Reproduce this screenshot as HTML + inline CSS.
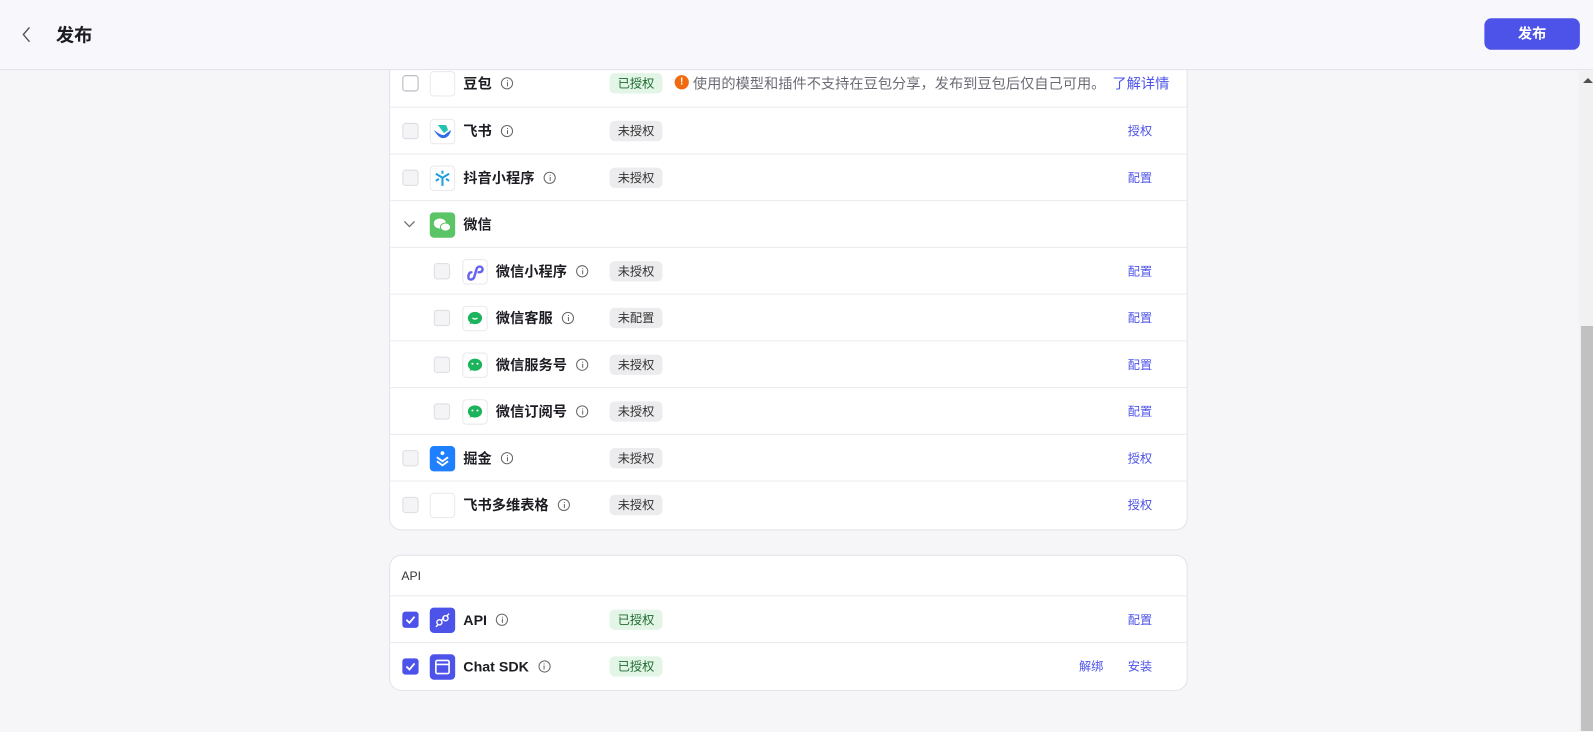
<!DOCTYPE html>
<html><head><meta charset="utf-8"><style>
*{box-sizing:border-box;margin:0;padding:0}
body{width:1593px;height:731px;overflow:hidden;background:#f6f6f9;font-family:"Liberation Sans","Noto Sans CJK SC",sans-serif;position:relative;color:#1c1d23}
.wrap{position:absolute;left:0;top:0;width:1568px;height:720px;transform:scale(1.016);transform-origin:0 0}
.hdr{position:absolute;left:0;top:0;width:1600px;height:69px;background:#f7f7fc;border-bottom:1px solid #e3e3ea;z-index:5}
.hdr .t{position:absolute;left:55px;top:21px;font-size:18px;font-weight:bold}
.btn{position:absolute;left:1461px;top:18px;width:94px;height:31px;border-radius:7px;background:#4d53e8;color:#fff;font-size:14px;font-weight:bold;text-align:center;line-height:31px}
.card{position:absolute;left:383px;width:786px;background:#fff;border:1px solid #e2e2e8;border-radius:12px}
.row{position:absolute;left:0;width:784px;height:46px;border-top:1px solid #ebebef}
.cb{position:absolute;top:15px;width:16px;height:16px;border:1px solid #dcdce2;border-radius:3px;background:#f4f4f6}
.cb.w{background:#fff;border-color:#b5b5bd}
.cb.on{background:#4d53e8;border-color:#4d53e8}
.ic{position:absolute;top:11px;width:25px;height:25px;border:1px solid #e9e9ee;border-radius:4px;background:#fff;overflow:hidden}
.nm{position:absolute;top:13px;font-size:14px;font-weight:bold;color:#1c1d23;white-space:nowrap;line-height:20px}
.nm i{display:inline-block;width:12px;height:12px;border:1px solid #666;border-radius:50%;margin-left:9px;vertical-align:-1px;position:relative}
.nm i:after{content:"";position:absolute;left:4.5px;top:4px;width:1px;height:4px;background:#666}
.nm i:before{content:"";position:absolute;left:4.5px;top:2px;width:1px;height:1px;background:#666}
.bd{position:absolute;left:216px;top:13px;height:20px;width:52px;border-radius:5px;font-size:12px;text-align:center;line-height:20px;background:#ececee;color:#333}
.bd.g{background:#e2f5e6;color:#1e6b2f}
.ac{position:absolute;left:726px;top:14px;font-size:12px;color:#4d53e8}
</style></head><body>
<div class="wrap">
<div class="hdr">
<svg style="position:absolute;left:21px;top:26px" width="10" height="16" viewBox="0 0 10 16"><path d="M8 1L2 8l6 7" fill="none" stroke="#555" stroke-width="1.4"/></svg>
<div class="t">发布</div>
<div class="btn">发布</div>
</div>

<div class="card" style="top:40px;height:482px">
<div class="row" style="top:18px;border-top:none">
<div class="cb w" style="left:12px"></div><div class="ic" style="left:39px"></div>
<div class="nm" style="left:72px">豆包<i></i></div><div class="bd g">已授权</div>
<div style="position:absolute;left:280px;top:15px;width:14px;height:14px;border-radius:50%;background:#f06a0f;color:#fff;font-size:10px;font-weight:bold;text-align:center;line-height:14px">!</div>
<div style="position:absolute;left:298px;top:13px;font-size:14px;color:#6b6b75">使用的模型和插件不支持在豆包分享，发布到豆包后仅自己可用。 <span style="color:#4d53e8;margin-left:3px">了解详情</span></div>
</div>
<div class="row" style="top:64px">
<div class="cb" style="left:12px"></div><div class="ic" style="left:39px"><svg width="23" height="23" viewBox="0 0 23 23"><path d="M3 10c3 2 6 5 10 5l7-5c-1 5-4 8-8 8-3 0-6-3-9-8z" fill="#2f6ce5"/><path d="M7 5h8l2 5-4 3z" fill="#21c2b0"/></svg></div>
<div class="nm" style="left:72px">飞书<i></i></div><div class="bd">未授权</div><div class="ac">授权</div></div>
<div class="row" style="top:110px">
<div class="cb" style="left:12px"></div><div class="ic" style="left:39px"><svg width="23" height="23" viewBox="0 0 23 23" fill="none" stroke="#1d9ee0" stroke-width="2"><path d="M11.5 11v8M11.5 11L5 7M11.5 11l6.5-4M5 14l3-2M18 14l-3-2M11.5 4v3"/></svg></div>
<div class="nm" style="left:72px">抖音小程序<i></i></div><div class="bd">未授权</div><div class="ac">配置</div></div>
<div class="row" style="top:156px">
<svg style="position:absolute;left:13px;top:19px" width="12" height="8"><path d="M1 1l5 5 5-5" fill="none" stroke="#666" stroke-width="1.2"/></svg>
<div class="ic" style="left:39px;background:#5ac466;border-color:#5ac466"><svg width="23" height="23" viewBox="0 0 23 23"><ellipse cx="9" cy="10" rx="6" ry="5" fill="#fff"/><ellipse cx="14.5" cy="13.5" rx="5" ry="4" fill="#fff" stroke="#5ac466"/></svg></div>
<div class="nm" style="left:72px">微信</div></div>
<div class="row" style="top:202px">
<div class="cb" style="left:43px"></div><div class="ic" style="left:71px"><svg width="23" height="23" viewBox="0 0 23 23"><path d="M5 17c0 3 5 3 6-1l2-7c1-4 6-3 6 0s-3 3-4 3M8 12c-2 0-3 2-3 5" fill="none" stroke="#6464ee" stroke-width="2.4" stroke-linecap="round"/></svg></div>
<div class="nm" style="left:104px">微信小程序<i></i></div><div class="bd">未授权</div><div class="ac">配置</div></div>
<div class="row" style="top:248px">
<div class="cb" style="left:43px"></div><div class="ic" style="left:71px"><svg width="23" height="23" viewBox="0 0 23 23"><ellipse cx="11.5" cy="11" rx="7" ry="6" fill="#1bb35c"/><path d="M6 17l2-3 2 2z" fill="#1bb35c"/><path d="M9 11q2.5 2 5 0" stroke="#fff" stroke-width="1.3" fill="none"/></svg></div>
<div class="nm" style="left:104px">微信客服<i></i></div><div class="bd">未配置</div><div class="ac">配置</div></div>
<div class="row" style="top:294px">
<div class="cb" style="left:43px"></div><div class="ic" style="left:71px"><svg width="23" height="23" viewBox="0 0 23 23"><ellipse cx="11.5" cy="11" rx="7" ry="6" fill="#1bb35c"/><path d="M6 17l2-3 2 2z" fill="#1bb35c"/><circle cx="9" cy="10" r="1" fill="#fff"/><circle cx="14" cy="10" r="1" fill="#fff"/></svg></div>
<div class="nm" style="left:104px">微信服务号<i></i></div><div class="bd">未授权</div><div class="ac">配置</div></div>
<div class="row" style="top:340px">
<div class="cb" style="left:43px"></div><div class="ic" style="left:71px"><svg width="23" height="23" viewBox="0 0 23 23"><ellipse cx="11.5" cy="11" rx="7" ry="6" fill="#1bb35c"/><path d="M6 17l2-3 2 2z" fill="#1bb35c"/><circle cx="9" cy="10" r="1" fill="#fff"/><circle cx="14" cy="10" r="1" fill="#fff"/></svg></div>
<div class="nm" style="left:104px">微信订阅号<i></i></div><div class="bd">未授权</div><div class="ac">配置</div></div>
<div class="row" style="top:386px">
<div class="cb" style="left:12px"></div><div class="ic" style="left:39px;background:#1e80ff;border-color:#1e80ff"><svg width="23" height="23" viewBox="0 0 23 23" fill="none" stroke="#fff" stroke-width="1.8"><path d="M6 10l5.5 4 5.5-4M6 14l5.5 4 5.5-4"/><circle cx="11.5" cy="6" r="1" fill="#fff"/></svg></div>
<div class="nm" style="left:72px">掘金<i></i></div><div class="bd">未授权</div><div class="ac">授权</div></div>
<div class="row" style="top:432px">
<div class="cb" style="left:12px"></div><div class="ic" style="left:39px"></div>
<div class="nm" style="left:72px">飞书多维表格<i></i></div><div class="bd">未授权</div><div class="ac">授权</div></div>
</div>

<div class="card" style="top:546px;height:134px">
<div style="position:absolute;left:11px;top:13px;font-size:12px;color:#333">API</div>
<div class="row" style="top:39px">
<div class="cb on" style="left:12px"><svg width="14" height="14" viewBox="0 0 14 14"><path d="M3 7l3 3 5-6" fill="none" stroke="#fff" stroke-width="1.8"/></svg></div>
<div class="ic" style="left:39px;background:#4d53e8;border-color:#4d53e8"><svg width="23" height="23" viewBox="0 0 23 23" fill="none" stroke="#fff" stroke-width="1.4"><rect x="6" y="11" width="5" height="5" rx="2.5" transform="rotate(-45 8.5 13.5)"/><rect x="12" y="7" width="5" height="5" rx="2.5" transform="rotate(-45 14.5 9.5)"/><path d="M5 18l2-2M16 7l2-2M10 12l3-3"/></svg></div>
<div class="nm" style="left:72px">API<i></i></div><div class="bd g">已授权</div><div class="ac">配置</div></div>
<div class="row" style="top:85px">
<div class="cb on" style="left:12px"><svg width="14" height="14" viewBox="0 0 14 14"><path d="M3 7l3 3 5-6" fill="none" stroke="#fff" stroke-width="1.8"/></svg></div>
<div class="ic" style="left:39px;background:#4d53e8;border-color:#4d53e8"><svg width="23" height="23" viewBox="0 0 23 23"><rect x="5" y="5" width="13" height="13" rx="1.5" fill="none" stroke="#fff" stroke-width="1.6"/><path d="M5 9h13" stroke="#fff" stroke-width="1.6"/></svg></div>
<div class="nm" style="left:72px">Chat SDK<i></i></div><div class="bd g">已授权</div>
<div class="ac" style="left:678px">解绑</div><div class="ac">安装</div></div>
</div>
</div>
<div style="position:absolute;left:1579px;top:71px;width:14px;height:660px;background:#f1f1f1"></div>
<div style="position:absolute;left:1581px;top:326px;width:12px;height:405px;background:#c1c1c1"></div>
<svg style="position:absolute;left:1583px;top:77px" width="10" height="6"><path d="M0 6L5 1L10 6z" fill="#505050"/></svg>
</body></html>
